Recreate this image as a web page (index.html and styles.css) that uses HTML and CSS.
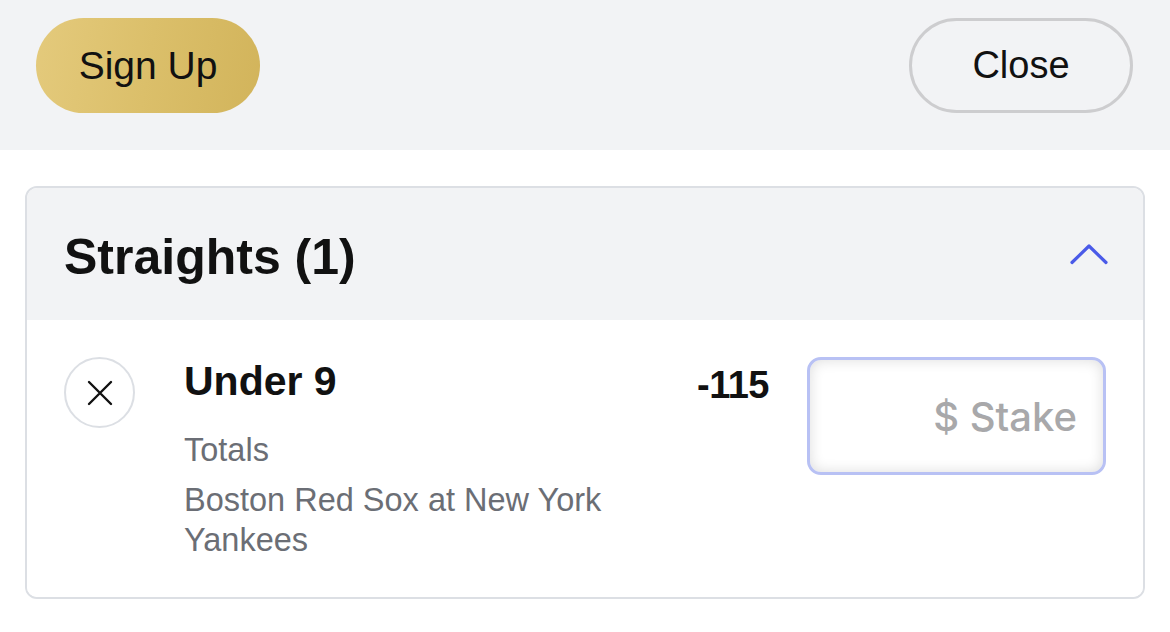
FILE: index.html
```html
<!DOCTYPE html>
<html lang="en">
<head>
<meta charset="utf-8">
<title>Bet Slip</title>
<link rel="stylesheet" href="styles.css">
</head>
<body>
  <header class="topbar">
    <button class="btn btn-signup">Sign Up</button>
    <button class="btn btn-close">Close</button>
  </header>
  <main class="content">
    <section class="card">
      <div class="card-head">
        <h2 class="card-title">Straights (1)</h2>
        <svg class="chevron" width="40" height="22" viewBox="0 0 40 22" aria-hidden="true">
          <path d="M3 19.5 L20 3 L37 19.5" fill="none" stroke="#4a5ae8" stroke-width="3.2" stroke-linecap="round" stroke-linejoin="round"/>
        </svg>
      </div>
      <div class="bet-row">
        <button class="remove" aria-label="Remove">
          <svg width="28" height="28" viewBox="0 0 28 28" aria-hidden="true">
            <path d="M3 3 L25 25 M25 3 L3 25" stroke="#111" stroke-width="2.4" stroke-linecap="round"/>
          </svg>
        </button>
        <div class="bet-info">
          <div class="bet-title">Under 9</div>
          <div class="bet-market">Totals</div>
          <div class="bet-event">Boston Red Sox at New York Yankees</div>
        </div>
        <div class="bet-odds">-115</div>
        <div class="stake">$ Stake</div>
      </div>
    </section>
  </main>
</body>
</html>
```

FILE: styles.css
```css
* { box-sizing: border-box; }
html, body { margin: 0; padding: 0; background: #ffffff; }
body {
  font-family: "Liberation Sans", Arial, sans-serif;
  color: #111;
  width: 1170px;
  height: 632px;
  overflow: hidden;
}
.topbar {
  height: 150px;
  background: #f2f3f5;
  display: flex;
  justify-content: space-between;
  align-items: flex-start;
  padding: 18px 37px 0 36px;
}
.btn {
  font-family: "Liberation Sans", Arial, sans-serif;
  font-size: 38px;
  color: #111;
  border-radius: 48px;
  cursor: pointer;
  display: flex;
  align-items: center;
  justify-content: center;
  padding: 0;
}
.btn-signup {
  width: 224px;
  height: 95px;
  border: none;
  background: linear-gradient(100deg, #e4ca7c 0%, #dbbf6a 50%, #d2b45b 100%);
  font-size: 39px;
  padding-top: 1px;
}
.btn-close {
  width: 224px;
  height: 95px;
  border: 3px solid #cdcdcf;
  background: transparent;
  padding-top: 0;
}
.content {
  padding: 36px 25px 0 25px;
}
.card {
  border: 2px solid #dcdfe4;
  border-radius: 12px;
  overflow: hidden;
}
.card-head {
  height: 132px;
  background: #f2f3f5;
  display: flex;
  align-items: center;
  justify-content: space-between;
  padding: 6px 34px 0 37px;
}
.card-title {
  margin: 0;
  font-size: 50px;
  font-weight: 700;
  line-height: 56px;
}
.chevron { margin-top: -6px; }
.bet-row {
  display: flex;
  align-items: flex-start;
  padding: 37px 37px 37px 37px;
  background: #fff;
}
.remove {
  width: 71px;
  height: 71px;
  border-radius: 50%;
  border: 2px solid #dcdfe4;
  background: #fff;
  display: flex;
  align-items: center;
  justify-content: center;
  padding: 0;
  flex: none;
  margin-right: 49px;
}
.bet-info {
  flex: 1;
  padding-right: 40px;
}
.bet-title {
  font-size: 41px;
  font-weight: 700;
  line-height: 48px;
}
.bet-market, .bet-event {
  font-size: 32.5px;
  line-height: 40px;
  color: #6b6e75;
}
.bet-market { margin-top: 25px; }
.bet-event { margin-top: 10px; }
.bet-odds {
  font-size: 38px;
  font-weight: 700;
  line-height: 48px;
  margin-top: 4px;
  margin-right: 38px;
  letter-spacing: -0.5px;
}
.stake {
  width: 299px;
  height: 118px;
  border: 3px solid #b8c1f4;
  border-radius: 14px;
  box-shadow: inset 0 0 14px rgba(0, 0, 0, 0.14);
  background: #fff;
  display: flex;
  align-items: center;
  justify-content: flex-end;
  padding: 0 26px 0 0;
  font-family: "Inter", "Liberation Sans", sans-serif;
  font-weight: 500;
  font-size: 40px;
  color: #a8a8aa;
  flex: none;
}
```
